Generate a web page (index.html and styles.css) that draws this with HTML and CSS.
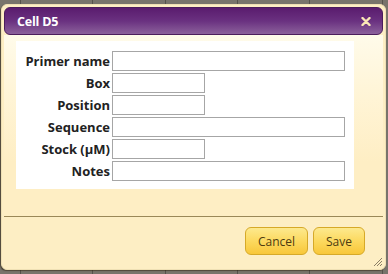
FILE: index.html
```html
<!DOCTYPE html>
<html>
<head>
<meta charset="utf-8">
<link rel="stylesheet" href="styles.css">
</head>
<body>
<div class="dialog">
  <div class="titlebar">
    <span class="title">Cell D5</span>
    <svg class="close" width="10" height="9" viewBox="0 0 10 9"><path d="M1.5 1 L8.5 8 M8.5 1 L1.5 8" stroke="#fbe8b6" stroke-width="2.4" stroke-linecap="round"/></svg>
  </div>
  <div class="content">
    <div class="form">
      <label>Primer name</label><input class="long" type="text">
      <label>Box</label><input class="short" type="text">
      <label>Position</label><input class="short" type="text">
      <label>Sequence</label><input class="long" type="text">
      <label>Stock (µM)</label><input class="short" type="text">
      <label>Notes</label><input class="long" type="text">
    </div>
  </div>
  <div class="buttonpane">
    <button class="btn btn-cancel">Cancel</button>
    <button class="btn btn-save">Save</button>
  </div>
  <svg class="grip" width="10" height="10" viewBox="0 0 10 10"><path d="M9 1 L1 9 M9 4 L4 9 M9 7 L7 9" stroke="#8a7e66" stroke-width="1"/></svg>
</div>
</body>
</html>
```
FILE: styles.css
```css
html, body {
  margin: 0;
  height: 274px;
  overflow: hidden;
}
body {
  padding: 4px 0 0 1px;
  box-sizing: border-box;
  background-color: #78746b;
  background-image: repeating-linear-gradient(90deg, transparent 0 20px, #55524b 20px 21px, transparent 21px 72.3px);
  font-family: "Open Sans", "DejaVu Sans", sans-serif;
}
.dialog {
  position: relative;
  width: 385px;
  height: 266px;
  box-sizing: border-box;
  border: 1px solid #efe0b4;
  padding: 2px;
  border-radius: 6px;
  background: #fdeec4;
  display: flex;
  flex-direction: column;
  box-shadow: -1px 1px 1px rgba(40,30,10,0.5);
}
.titlebar {
  height: 28px;
  box-sizing: border-box;
  border: 1px solid #4b1d5c;
  border-radius: 6px;
  background: linear-gradient(#5a1c6e 0%, #6a3180 50%, #8b619b 100%);
  display: flex;
  align-items: center;
  justify-content: space-between;
  padding: 0 11px 0 12px;
}
.title {
  color: #fff;
  font-weight: 700;
  font-size: 12.5px;
  letter-spacing: -0.2px;
}
.close {
  display: block;
  margin-top: 1px;
}
.content {
  height: 181px;
  box-sizing: border-box;
  padding: 6px 0 0 12px;
  background: linear-gradient(#fffbea 0%, #fff5d8 30%, #feeec4 70%);
}
.form {
  width: 338px;
  box-sizing: border-box;
  background: #fff;
  padding: 10px 0 8px 8px;
  display: grid;
  grid-template-columns: 86px auto;
  column-gap: 2px;
  row-gap: 2px;
  justify-content: start;
  align-items: center;
}
.form label {
  text-align: right;
  font-weight: 700;
  font-size: 13px;
  color: #222;
  line-height: 20px;
  white-space: nowrap;
}
.form input {
  height: 20px;
  box-sizing: border-box;
  border: 1px solid #a6a6a6;
  background: #fff;
  margin: 0;
  padding: 0 2px;
  font-size: 12px;
  font-family: inherit;
}
.form input.long { width: 233px; }
.form input.short { width: 93px; }
.buttonpane {
  flex: 1;
  border-top: 1px solid #9a8858;
  display: flex;
  justify-content: flex-end;
  align-items: flex-start;
  gap: 5px;
  padding: 10px 18px 0 0;
}
.btn {
  height: 28px;
  box-sizing: border-box;
  border: 1px solid #d6a928;
  border-radius: 6px;
  background: linear-gradient(#fde98e 0%, #fcd95f 50%, #f8c73a 100%);
  color: #4d3b10;
  font-family: inherit;
  font-size: 12px;
  padding: 0;
}
.btn-cancel { width: 63px; }
.btn-save { width: 52px; }
.grip {
  position: absolute;
  right: 2px;
  bottom: 2px;
}
```
